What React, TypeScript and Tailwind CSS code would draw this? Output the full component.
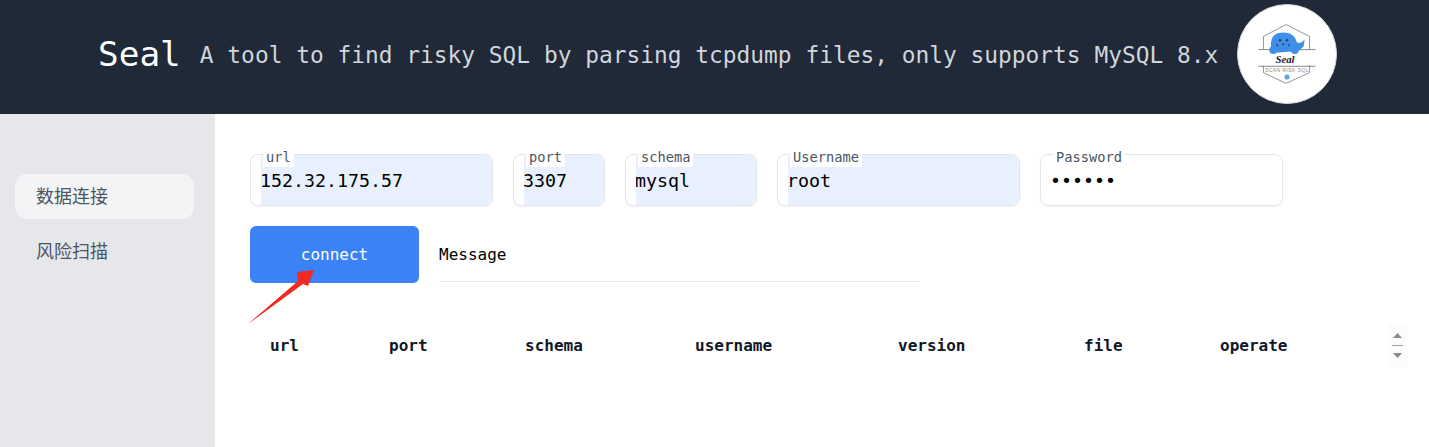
const mono = "font-['DejaVu_Sans_Mono','Liberation_Mono',monospace]";

function Logo() {
  return (
    <div className="flex h-[100px] w-[100px] shrink-0 items-center justify-center rounded-full border border-gray-300 bg-white">
      <svg width="100" height="100" viewBox="0 0 100 100">
        <path d="M26 45 V32 L49 20 L73 32 V45" fill="none" stroke="#666" strokeWidth="0.7" />
        <path d="M26 62 V69 L49 80 L73 69 V62" fill="none" stroke="#666" strokeWidth="0.7" />
        <line x1="21" y1="45.5" x2="79" y2="45.5" stroke="#666" strokeWidth="0.8" />
        <line x1="21" y1="62.5" x2="79" y2="62.5" stroke="#666" strokeWidth="0.8" />
        <path d="M34 46 C32 33 37 28 46 28 C55 28 59 33 60 38 C62 40 66 38 68 35 L67 42 L62 47 L34 49 Z" fill="#3f8fe8" />
        <circle cx="36" cy="46" r="4" fill="#3f8fe8" />
        <circle cx="58" cy="46" r="4" fill="#3f8fe8" />
        <g fill="#1f3f73">
          <circle cx="43" cy="36" r="1.2" />
          <circle cx="50" cy="36" r="1.2" />
          <circle cx="40" cy="41" r="1" />
          <circle cx="46" cy="40" r="1" />
          <circle cx="52" cy="41" r="1" />
        </g>
        <text x="48" y="59" textAnchor="middle" fontFamily="'Liberation Serif', serif" fontStyle="italic" fontWeight="700" fontSize="11" fill="#1b2233">Seal</text>
        <text x="50" y="68" textAnchor="middle" fontFamily="'Liberation Sans', sans-serif" fontSize="5" letterSpacing="0.5" fill="#888">SCAN RISK SQL</text>
        <circle cx="50" cy="73.5" r="2.6" fill="#5ea3ea" />
      </svg>
    </div>
  );
}

function Field({ label, value, width, type = "text", filled = true }: { label: string; value: string; width: string; type?: string; filled?: boolean }) {
  return (
    <div className={`relative h-[52px] shrink-0 rounded-lg border border-[#e2e5ea] pl-[10px] shadow-[0_1px_2px_rgba(0,0,0,0.05)] ${width}`}>
      <div className={`h-full w-full rounded-r-lg ${filled ? "bg-[#e8f0fe]" : "bg-white"}`}>
        <input
          readOnly
          type={type}
          value={value}
          className={`${mono} h-full w-full bg-transparent pt-[1px] indent-[-1px] text-[18.3px] text-black outline-none`}
        />
      </div>
      <span className={`${mono} absolute left-[12px] top-[-8px] bg-white px-[3px] text-[13.7px] leading-[20px] text-[#4b5563]`}>{label}</span>
    </div>
  );
}

const columns = ["url", "port", "schema", "username", "version", "file", "operate"];

export default function App() {
  return (
    <div className={`${mono} flex h-[447px] w-full flex-col overflow-hidden bg-white`}>
      <header className="flex h-[114px] shrink-0 items-center bg-[#1f2937] pb-[6px] pl-[98px]">
        <span className="mt-[2px] text-[34.4px] text-white">Seal</span>
        <span className="ml-[19px] mt-[2px] text-[22.86px] text-[#d1d5db]">A tool to find risky SQL by parsing tcpdump files, only supports MySQL 8.x</span>
        <div className="ml-[19px]"><Logo /></div>
      </header>
      <div className="flex min-h-0 flex-1">
        <aside className="w-[215px] shrink-0 bg-[#e5e7eb] px-[15px] pt-[60px] font-['Noto_Sans_CJK_SC',sans-serif] text-[18px] text-[#4b5563]">
          <div className="flex h-[45px] w-[179px] items-center rounded-xl bg-[#f3f4f6] pb-[2px] pl-[21px]">数据连接</div>
          <div className="mt-[10px] flex h-[45px] w-[179px] items-center pb-[2px] pl-[21px]">风险扫描</div>
        </aside>
        <main className="relative min-w-0 flex-1 pl-[35px] pt-[40px]">
          <div className="flex gap-[20px]">
            <Field label="url" value="152.32.175.57" width="w-[243px]" />
            <Field label="port" value="3307" width="w-[92px]" />
            <Field label="schema" value="mysql" width="w-[132px]" />
            <Field label="Username" value="root" width="w-[243px]" />
            <Field label="Password" value="123456" width="w-[243px]" type="password" filled={false} />
          </div>
          <div className="mt-[20px] flex items-start">
            <button className="h-[57px] w-[169px] rounded-md bg-[#3b82f6] text-[16px] text-white">connect</button>
            <div className="ml-[20px] flex h-[56px] w-[480px] items-center border-b border-[#e5e7eb] pt-[2px] text-[16px] text-black">Message</div>
          </div>
          <div className="mt-[36px] grid h-[54px] w-[1155px] grid-cols-[119px_136px_170px_203px_186px_136px_1fr] items-center text-[16px] font-bold text-[#111827]">
            {columns.map((c) => (
              <div key={c} className="pl-[20px]">{c}</div>
            ))}
          </div>
          <div className="absolute left-[1172px] top-[209px] flex h-[45px] w-[20px] flex-col items-center justify-center gap-[7px] bg-[#fcfcfc]">
            <svg width="9" height="5" viewBox="0 0 9 5"><path d="M4.5 0 L9 5 H0 Z" fill="#8a8a8a" /></svg>
            <div className="h-px w-[11px] bg-[#a0a0a0]" />
            <svg width="9" height="5" viewBox="0 0 9 5"><path d="M0 0 H9 L4.5 5 Z" fill="#8a8a8a" /></svg>
          </div>
          <svg className="absolute left-[30px] top-[150px]" width="75" height="66" viewBox="0 0 75 66">
            <path d="M3 60 L53 17 L52 8 L69 6 L63 22 L58 20 Z" fill="#f02a25" />
          </svg>
        </main>
      </div>
    </div>
  );
}
